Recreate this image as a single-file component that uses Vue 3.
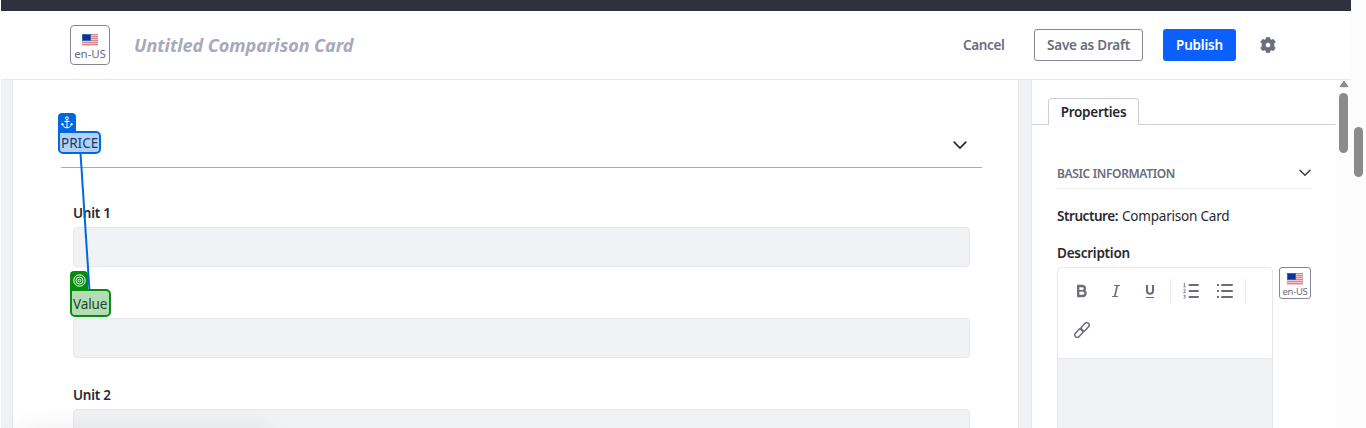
<script setup>
const fields = [
  { label: 'Unit 1', cls: 'unit' },
  { label: 'Value', cls: 'value' },
  { label: 'Unit 2', cls: 'unit' },
]
const stripes = [0, 2, 4, 6, 8, 10]
</script>

<template>
  <div class="window">
    <div class="app">
      <div class="topbar"></div>
      <header class="header">
        <button class="locale large">
          <svg class="flag" width="16" height="12" viewBox="0 0 16 12">
            <rect width="16" height="12" fill="#f2c6ca" />
            <rect v-for="s in stripes" :key="s" :y="s" width="16" height="1" fill="#d9868b" />
            <rect width="9" height="7" fill="#3c62ad" />
            <rect x="1" y="1" width="7" height="5" fill="#0335a0" />
          </svg>
          <span>en-US</span>
        </button>
        <div class="title"><span>Untitled Comparison Card</span></div>
        <div class="cancel"><span>Cancel</span></div>
        <button class="btn draft"><span>Save as Draft</span></button>
        <button class="btn publish"><span>Publish</span></button>
        <svg class="gear" width="16" height="16" viewBox="0 0 16 16">
          <path fill="#6b6c7e" fill-rule="evenodd" d="M6.300.3h3.400l.4 2 1.300.7 2-.7L15.400 5.200 13.900 6.600v2.800L15.400 10.800l-2 2.900-2-.7-1.300.7-.4 2H6.300l-.4-2-1.300-.7-2 .7L.6 10.800l1.500-1.400V6.600L.6 5.200l2-2.900 2 .7 1.300-.7zM8 5.400a2.600 2.600 0 1 0 0 5.200 2.600 2.600 0 0 0 0-5.200z" stroke="#6b6c7e" stroke-width=".6" stroke-linejoin="round" />
        </svg>
      </header>
      <div class="body">
        <main class="sheet">
          <div class="section">
            <span class="section-name">PRICE</span>
            <svg class="chev" width="14" height="9" viewBox="0 0 14 9"><path d="M1.200 1.200 7 7l5.800-5.800" fill="none" stroke="#272833" stroke-width="1.700" stroke-linecap="round" /></svg>
          </div>
          <div class="fields">
            <div v-for="f in fields" :key="f.label" class="field">
              <label :class="f.cls"><span>{{ f.label }}</span></label>
              <div class="input"></div>
            </div>
          </div>
        </main>
        <aside class="side">
          <nav class="tabs">
            <div class="lead"></div>
            <div class="tab"><span>Properties</span></div>
            <div class="rest"></div>
          </nav>
          <div class="props">
            <div class="group">
              <span class="group-name">BASIC INFORMATION</span>
              <svg width="12" height="8" viewBox="0 0 12 8"><path d="M1 1.200 6 6.200l5-5" fill="none" stroke="#393a4a" stroke-width="1.500" stroke-linecap="round" /></svg>
            </div>
            <p class="structure"><b>Structure:</b><span class="sv">Comparison Card</span></p>
            <p class="desc"><span>Description</span></p>
            <div class="row">
              <div class="editor">
                <div class="toolbar">
                  <div class="tool"><svg width="16" height="16" viewBox="0 0 16 16"><path d="M4.700 3v10h4.100c2.200 0 3.200-1.100 3.200-2.800S11 7.900 9.800 7.800c1-.3 1.600-1 1.600-2.200C11.400 3.900 10.300 3 8.400 3z" transform="translate(-.5)" fill="none" stroke="#6b6c7e" stroke-width="2.300" /><path d="M4.500 7.800h5" stroke="#6b6c7e" stroke-width="1.700" /></svg></div>
                  <div class="tool"><svg width="16" height="16" viewBox="0 0 16 16"><path d="M6 2.500h6M4 13.500h6" stroke="#6b6c7e" stroke-width="1.100" /><path d="M9.300 2.500 6.700 13.500" stroke="#6b6c7e" stroke-width="1.600" /></svg></div>
                  <div class="tool"><svg width="16" height="16" viewBox="0 0 16 16"><path d="M5 2v5.800C5 10 6.200 10.800 8 10.800s3-.8 3-3V2" fill="none" stroke="#6b6c7e" stroke-width="2.100" /><path d="M4 14.500h8" stroke="#6b6c7e" stroke-width="1" /></svg></div>
                  <i class="sep"></i>
                  <div class="tool"><svg width="16" height="16" viewBox="0 0 16 16"><path d="M6.500 2H15M6.500 8H15M6.500 14H15" stroke="#6b6c7e" stroke-width="2" stroke-linecap="round" /><path d="M.5 1 1.600.4v3.400M.4 3.800h2.400M.5 6.600c.5-.8 2-.6 1.900.3L.6 9.500h2.200M.4 12.200h2L1.400 13.600c1.700.1 1.500 2-.9 1.600" fill="none" stroke="#6b6c7e" stroke-width=".8" /></svg></div>
                  <div class="tool"><svg width="16" height="16" viewBox="0 0 16 16"><path d="M5 2h10M5 8h10M5 14h10" stroke="#6b6c7e" stroke-width="2" stroke-linecap="round" /><path d="M0 1h2v2H0zM0 7h2v2H0zM0 13h2v2H0z" fill="#6b6c7e" /></svg></div>
                  <i class="sep"></i>
                  <div class="tool"><svg width="16" height="16" viewBox="0 0 16 16"><g fill="none" stroke="#6b6c7e" stroke-width="1.500"><rect x="-4.900" y="-2.500" width="9.800" height="5" rx="2.500" transform="translate(4.900 11.100) rotate(-48)" /><rect x="-4.900" y="-2.500" width="9.800" height="5" rx="2.500" transform="translate(11.100 4.900) rotate(-48)" /></g></svg></div>
                </div>
                <div class="area"></div>
              </div>
              <button class="locale">
                <svg class="flag" width="16" height="12" viewBox="0 0 16 12">
                  <rect width="16" height="12" fill="#f2c6ca" />
                  <rect v-for="s in stripes" :key="s" :y="s" width="16" height="1" fill="#d9868b" />
                  <rect width="9" height="7" fill="#3c62ad" />
                  <rect x="1" y="1" width="7" height="5" fill="#0335a0" />
                </svg>
                <span>en-US</span>
              </button>
            </div>
          </div>
        </aside>
        <div class="scroll inner">
          <svg width="10" height="8" viewBox="0 0 10 8"><path d="M5 1 9 6.700H1z" fill="#8b8b8b" stroke="#8b8b8b" stroke-linejoin="round" /></svg>
          <div class="thumb"></div>
        </div>
      </div>
    </div>
    <div class="scroll outer"><div class="thumb"></div></div>

    <svg class="link" width="14" height="138" viewBox="0 0 14 138"><path d="M2.500 0 11.500 138" stroke="#0068e0" stroke-width="2" /></svg>
    <div class="mark anchor">
      <div class="flap"><svg width="12" height="13" viewBox="0 0 12 13"><g fill="none" stroke="#fff" stroke-width="1"><circle cx="6" cy="2.200" r="1.400" /><path d="M6 3.600v8.200M3.400 5.400h5.200M1.200 7.300C1.500 10.200 3.500 11.800 6 11.800s4.500-1.600 4.800-4.500M.5 9l.7-1.700L2.800 8.600M9.200 8.600l1.600-1.300.7 1.700" /></g></svg></div>
      <div class="frame"></div>
    </div>
    <div class="mark target">
      <div class="flap"><svg width="13" height="13" viewBox="0 0 13 13"><g fill="none" stroke="#fff" stroke-width="1"><circle cx="6.500" cy="6.500" r="5.700" /><circle cx="6.500" cy="6.500" r="3.500" /><circle cx="6.500" cy="6.500" r="1.300" /></g></svg></div>
      <div class="frame"></div>
    </div>
    <div class="haze"></div>
  </div>
</template>

<style>
html, body { margin: 0; overflow: hidden; background: #fff; }
</style>

<style scoped>
* { box-sizing: border-box; }
.window { position: relative; display: flex; width: 1366px; height: 428px; padding-left: 1px; overflow: hidden; background: #fff; font-family: "Noto Sans", "Open Sans", sans-serif; font-size: 13.5px; line-height: 21px; color: #272833; white-space: nowrap; }
.app { width: 1350px; display: flex; flex-direction: column; }
.topbar { height: 11px; background: #30313f; flex: none; }
.header { height: 69px; flex: none; display: flex; align-items: center; border-bottom: 1px solid #e7e7ed; padding-left: 69px; }
button { font: inherit; padding: 0; background: #fff; }
.locale { width: 32px; height: 32px; flex: none; border: 1px solid #84859a; border-radius: 3px; display: flex; flex-direction: column; align-items: center; padding-top: 5px; color: #6b6c7e; font-size: 9.5px; line-height: 13px; letter-spacing: -.3px; }
.locale svg { flex: none; display: block; }
.large { width: 40px; height: 40px; padding-top: 8px; border-radius: 4px; font-size: 11.5px; line-height: 16px; letter-spacing: -.1px; }
.title { margin-left: 24px; width: 829px; font-size: 18px; font-weight: 700; font-style: italic; color: #a7a9bc; letter-spacing: -.05px; }
.cancel { width: 71px; padding-top: 1px; color: #6b6c7e; font-weight: 600; letter-spacing: -.35px; }
.btn { height: 32px; padding-top: 1px; border-radius: 3px; font-weight: 600; }
.draft { width: 109px; border: 1px solid #84859a; color: #6b6c7e; letter-spacing: -.25px; }
.publish { width: 73px; margin-left: 20px; border: 0; background: #0b5fff; color: #fff; letter-spacing: -.2px; }
.gear { margin-left: 24px; }
.body { flex: 1; min-height: 0; display: flex; background: #f1f2f5; padding-left: 11px; }
.sheet { width: 1007px; flex: none; background: #fff; border: solid #e7e7ed; border-width: 0 1px; padding: 0 36px 0 48px; }
.section { height: 88px; border-bottom: 1px solid #a7a9bc; display: flex; justify-content: space-between; align-items: center; padding: 40px 15px 0 0; }
.section-name { letter-spacing: 0; }
.chev { display: block; margin-top: 3px; }
.fields { padding: 35px 12px 0; }
.field { height: 91px; }
.field label { display: block; height: 21px; font-weight: 600; letter-spacing: -.25px; }
.field label.value { font-weight: 400; letter-spacing: -.1px; }
.input { margin-top: 3px; height: 40px; background: #f1f2f5; border: 1px solid #e7e7ed; border-radius: 4px; }
.side { margin-left: 12px; width: 305px; flex: none; background: #fff; border-left: 1px solid #e7e7ed; padding-top: 18px; }
.tabs { display: flex; height: 27px; }
.lead { width: 16px; border-bottom: 1px solid #cdced9; }
.rest { flex: 1; border-bottom: 1px solid #cdced9; }
.tab { width: 91px; border: 1px solid #cdced9; border-bottom: 0; border-radius: 4px 4px 0 0; text-align: center; font-weight: 600; line-height: 27px; letter-spacing: -.27px; }
.props { padding: 37px 25px 0; }
.group { height: 27px; border-bottom: 1px solid #f0f0f4; display: flex; justify-content: space-between; padding-top: 1px; color: #6b6c7e; font-size: 12px; font-weight: 600; }
.group svg { margin-top: 6px; }
.group-name { letter-spacing: -.35px; }
p { margin: 0; }
.structure { margin-top: 17px; display: flex; gap: 4px; }
.structure b { font-weight: 600; letter-spacing: -.45px; }
.sv { letter-spacing: -.2px; }
.desc { margin-top: 16px; font-weight: 600; letter-spacing: -.25px; }
.row { display: flex; gap: 6px; margin-top: 3px; }
.editor { width: 216px; height: 200px; border: 1px solid #e7e7ed; border-radius: 4px 4px 0 0; }
.toolbar { height: 91px; border-bottom: 1px solid #e7e7ed; display: flex; flex-wrap: wrap; align-content: flex-start; padding: 3px 0 0 7px; }
.tool { width: 34px; height: 39px; display: flex; align-items: center; justify-content: center; }
.sep { width: 1px; height: 24px; margin: 8px 3px 0; background: #e7e7ed; }
.area { height: 109px; background: #f1f2f5; }
.scroll { background: #fcfcfc; width: 15px; display: flex; flex-direction: column; align-items: center; }
.inner svg { display: block; flex: none; }
.scroll .thumb { width: 9px; border-radius: 5px; background: #8b8b8b; }
.inner .thumb { height: 60px; margin-top: 5px; }
.outer .thumb { height: 50px; margin-top: 127px; }
.link { position: absolute; left: 78px; top: 153px; }
.mark { position: absolute; }
.flap { width: 18px; height: 20px; border-radius: 4px 4px 0 0; display: flex; justify-content: center; padding-top: 3px; }
.frame { margin-top: -2px; border: 2px solid; border-radius: 0 5px 5px 5px; }
.anchor { left: 58px; top: 113px; }
.anchor .flap { background: #0068e0; }
.anchor .frame { width: 43px; height: 23px; border-color: #0068e0; background: rgba(0, 104, 224, .3); }
.target { left: 70px; top: 271px; }
.target .flap { background: #078d0b; }
.target .frame { width: 41px; height: 28px; border-color: #078d0b; background: rgba(7, 141, 11, .3); }
.haze { position: absolute; left: 20px; top: 432px; width: 250px; height: 20px; box-shadow: 0 0 28px rgba(0, 0, 0, .1); }
</style>
